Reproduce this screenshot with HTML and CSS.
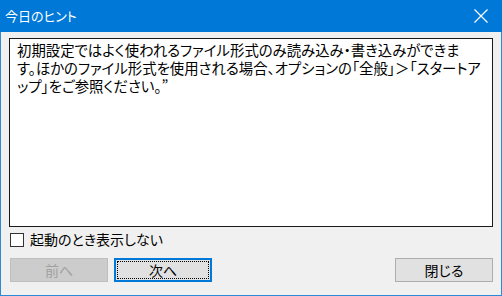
FILE: index.html
```html
<!DOCTYPE html>
<html lang="ja">
<head>
<meta charset="utf-8">
<link rel="stylesheet" href="styles.css">
</head>
<body>
<div class="window">
  <div class="titlebar">
    <span class="title">今日のヒント</span>
    <svg class="close" width="16" height="16" viewBox="0 0 16 16"><path d="M1.5 1.5 L14.5 14.5 M14.5 1.5 L1.5 14.5" stroke="#fff" stroke-width="1.2" fill="none"/></svg>
  </div>
  <div class="client">
    <div class="tipbox">初期設定ではよく使われるファイル形式のみ読み込み・書き込みができま<br>す。ほかのファイル形式を使用される場合、オプションの「全般」＞「スタートア<br>ップ」をご参照ください。”</div>
    <label class="check"><span class="box"></span><span>起動のとき表示しない</span></label>
    <div class="buttons">
      <button class="btn disabled">前へ</button>
      <button class="btn default"><span class="focus">次へ</span></button>
      <button class="btn right">閉じる</button>
    </div>
  </div>
</div>
</body>
</html>
```
FILE: styles.css
```css
html, body {
  margin: 0;
  padding: 0;
}
body {
  width: 502px;
  height: 296px;
  overflow: hidden;
  font-family: "Noto Sans CJK JP", "Noto Sans", sans-serif;
  font-feature-settings: "palt";
}
.window {
  display: flex;
  flex-direction: column;
  width: 502px;
  height: 296px;
}
.titlebar {
  height: 32px;
  flex: none;
  background: #0078d7;
  color: #fff;
  display: flex;
  align-items: center;
  justify-content: space-between;
  padding: 0 13px 0 5px;
  box-sizing: border-box;
}
.title {
  font-size: 13px;
  line-height: 16px;
}
.close {
  display: block;
}
.client {
  flex: 1;
  display: flex;
  flex-direction: column;
  background: #f0f0f0;
  border: 1px solid #2a8ad8;
  border-top: none;
  padding: 6px 8px 13px 8px;
  box-sizing: border-box;
}
.tipbox {
  height: 189px;
  box-sizing: border-box;
  background: #fff;
  border: 1px solid #1a1a1a;
  padding: 2px 2px 0 7px;
  font-size: 14.4px;
  line-height: 18px;
  color: #000;
  white-space: nowrap;
  overflow: hidden;
}
.check {
  display: flex;
  align-items: center;
  gap: 6px;
  margin-top: 5px;
  height: 15px;
  font-size: 14px;
  line-height: 15px;
  color: #000;
}
.box {
  width: 14px;
  height: 14px;
  margin-left: 1px;
  border: 1px solid #333;
  background: #fff;
  box-sizing: border-box;
  flex: none;
}
.buttons {
  display: flex;
  gap: 6px;
  margin-top: 11px;
  padding-left: 1px;
}
.btn {
  width: 98px;
  height: 24px;
  box-sizing: border-box;
  border: 1px solid #adadad;
  background: #e1e1e1;
  font-family: inherit;
  font-feature-settings: "palt";
  font-size: 14px;
  line-height: 16px;
  color: #000;
  padding: 0;
  display: flex;
  align-items: center;
  justify-content: center;
}
.btn.disabled {
  background: #cccccc;
  border-color: #bfbfbf;
  color: #a0a0a0;
}
.btn.default {
  border: 2px solid #0078d7;
  padding: 1px;
}
.focus {
  flex: 1;
  align-self: stretch;
  display: flex;
  align-items: center;
  justify-content: center;
  border: 1px dotted #000;
}
.btn.right {
  margin-left: auto;
}
```
